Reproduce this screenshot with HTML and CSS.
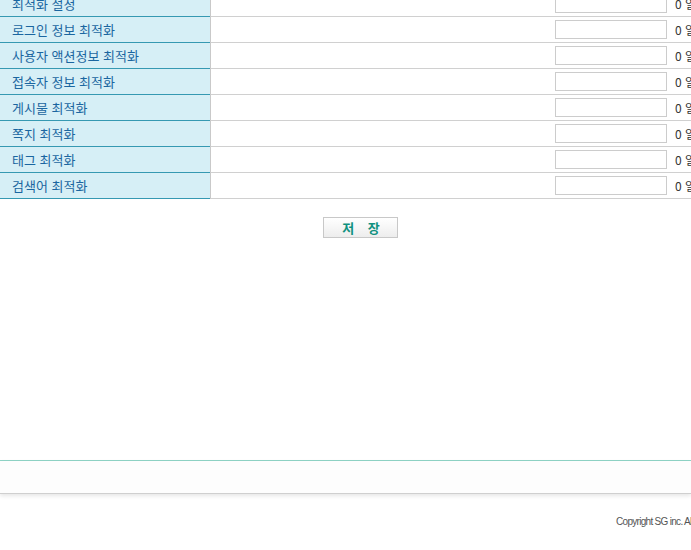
FILE: index.html
```html
<!DOCTYPE html>
<html lang="ko">
<head>
<meta charset="utf-8">
<title>최적화 설정</title>
<link rel="stylesheet" href="styles.css">
</head>
<body>
<div class="content">
  <div class="form-table">
    <div class="row"><div class="label">최적화 설정</div><div class="value"><input class="field" type="text"><span class="unit">0 일</span></div></div>
    <div class="row"><div class="label">로그인 정보 최적화</div><div class="value"><input class="field" type="text"><span class="unit">0 일</span></div></div>
    <div class="row"><div class="label">사용자 액션정보 최적화</div><div class="value"><input class="field" type="text"><span class="unit">0 일</span></div></div>
    <div class="row"><div class="label">접속자 정보 최적화</div><div class="value"><input class="field" type="text"><span class="unit">0 일</span></div></div>
    <div class="row"><div class="label">게시물 최적화</div><div class="value"><input class="field" type="text"><span class="unit">0 일</span></div></div>
    <div class="row"><div class="label">쪽지 최적화</div><div class="value"><input class="field" type="text"><span class="unit">0 일</span></div></div>
    <div class="row"><div class="label">태그 최적화</div><div class="value"><input class="field" type="text"><span class="unit">0 일</span></div></div>
    <div class="row"><div class="label">검색어 최적화</div><div class="value"><input class="field" type="text"><span class="unit">0 일</span></div></div>
  </div>
  <div class="actions"><button class="save" type="button">저 장</button></div>
</div>
<div class="footer-bar"></div>
<footer class="copyright">Copyright SG inc. All rights reserved.</footer>
</body>
</html>
```
FILE: styles.css
```css
html, body {
  margin: 0;
  padding: 0;
  overflow: hidden;
  background: #ffffff;
  font-family: "Noto Sans CJK KR", "Noto Sans", sans-serif;
}

.content {
  margin-top: -9px;
  min-height: 469px;
  border-bottom: 1px solid #8fd4c6;
}

.form-table {
  width: 900px;
  display: flex;
  flex-direction: column;
}

.row {
  display: flex;
  height: 26px;
}

.label {
  width: 210px;
  flex: none;
  box-sizing: border-box;
  height: 26px;
  padding-left: 12px;
  background: #d6eff6;
  border-bottom: 1px solid #3599b2;
  color: #1a66a0;
  font-size: 13px;
  line-height: 25px;
  white-space: nowrap;
}

.value {
  flex: 1;
  box-sizing: border-box;
  height: 26px;
  display: flex;
  align-items: center;
  gap: 8px;
  padding-left: 344px;
  border-left: 1px solid #c9c9c9;
  border-bottom: 1px solid #d0d0d0;
}

.field {
  width: 112px;
  height: 19px;
  box-sizing: border-box;
  margin: 0;
  padding: 0 3px;
  border: 1px solid #cccccc;
  background: #ffffff;
  outline: none;
}

.unit {
  font-size: 12px;
  color: #333333;
  white-space: nowrap;
}

.actions {
  display: flex;
  justify-content: center;
  padding-top: 18px;
}

.save {
  width: 75px;
  height: 21px;
  box-sizing: border-box;
  margin: 0 0 0 30px;
  padding: 0 0 0 6px;
  border: 1px solid #c8c8c8;
  background: linear-gradient(#ffffff, #ededed);
  color: #10917f;
  font-family: "Noto Sans CJK KR", "Noto Sans", sans-serif;
  font-size: 13px;
  font-weight: bold;
  letter-spacing: 5px;
  line-height: 19px;
}

.footer-bar {
  height: 32px;
  background: #fdfdfd;
  border-bottom: 1px solid #cfcfcf;
  box-shadow: 0 2px 4px rgba(0, 0, 0, 0.10);
}

.copyright {
  padding: 22px 0 0 616px;
  font-family: "Liberation Sans", Arial, sans-serif;
  font-size: 10px;
  letter-spacing: -0.7px;
  color: #555555;
  white-space: nowrap;
}
```
